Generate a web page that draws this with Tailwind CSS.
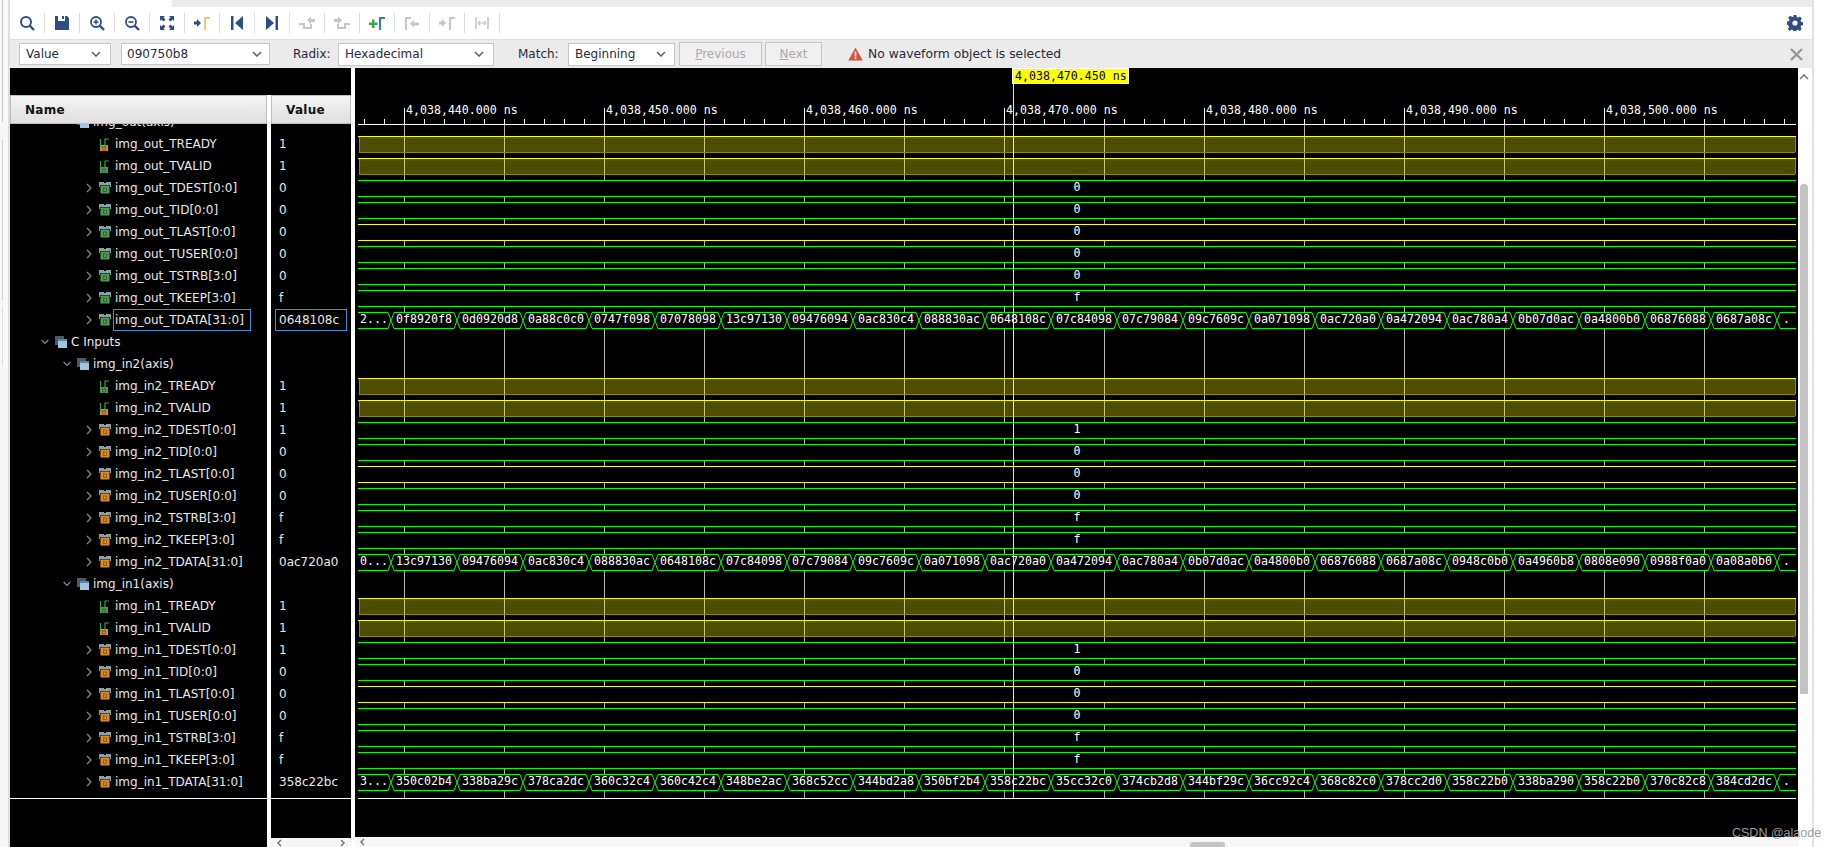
<!DOCTYPE html>
<html lang="en">
<head>
<meta charset="UTF-8">
<title>Waveform</title>
<script src="https://cdn.jsdelivr.net/npm/@tailwindcss/browser@4"></script>
</head>
<body class="bg-white">
<div class="flex w-[1825px] h-[847px] overflow-hidden font-['DejaVu_Sans',sans-serif] text-[12px] text-[#222]">

  <!-- left edge of the window behind -->
  <div class="w-[10px] h-full bg-[#f7f7f7] border-r-2 border-[#dedede] flex flex-col shrink-0">
    <div class="w-px h-[122px] ml-[2px] bg-[#c8c8c8]"></div>
    <div class="w-px h-[160px] mt-[18px] ml-[2px] bg-[#d4d4d4]"></div>
    <div class="w-px h-[60px] mt-[6px] ml-[2px] bg-[#e0e0e0]"></div>
  </div>

  <div class="w-[1802px] h-full flex flex-col shrink-0">
    <!-- top strip -->
    <div class="h-[7px] flex shrink-0">
      <div class="w-[162px] bg-white"></div>
      <div class="flex-1 bg-[#ebebeb]"></div>
    </div>

    <!-- toolbar -->
    <div class="h-[32px] bg-white flex items-center pl-[0px] shrink-0">
      <div class="flex items-center" id="toolbar"></div>
      <div class="flex-1"></div>
      <svg class="w-[16px] h-[16px] mr-[9px]" viewBox="0 0 16 16"><path fill="#2f4c86" d="M6.6 0h2.8l.4 2.2 1.5.6L12.8 1.500l2 2-1.300 1.900.6 1.500 2.200.4v2.800l-2.200.4-.6 1.500 1.300 1.900-2 2-1.900-1.300-1.500.6-.4 2.200H6.600l-.4-2.200-1.500-.6-1.900 1.300-2-2 1.300-1.900-.6-1.500L-.3 9.400V6.600l2.200-.4.6-1.500L1.200 2.800l2-2 1.900 1.300 1.500-.6z"/><circle cx="8" cy="8" r="2.600" fill="#fff"/></svg>
    </div>

    <!-- find bar -->
    <div class="h-[29px] bg-[#ebebeb] border-t border-[#e2e2e2] flex items-center shrink-0 text-[12px] text-[#2a2a3a]">
      <div class="ml-[9px] w-[92px] h-[22px] bg-white border border-[#c6c6c6] flex items-center justify-between pl-[6px] pr-[9px]"><span>Value</span><svg class="w-[10px] h-[6px]" viewBox="0 0 10 6"><path d="M1 1l4 4 4-4" fill="none" stroke="#666" stroke-width="1.600"/></svg></div>
      <div class="ml-[10px] w-[149px] h-[22px] bg-white border border-[#c6c6c6] flex items-center justify-between pl-[5px] pr-[7px]"><span>090750b8</span><svg class="w-[10px] h-[6px]" viewBox="0 0 10 6"><path d="M1 1l4 4 4-4" fill="none" stroke="#666" stroke-width="1.600"/></svg></div>
      <span class="ml-[23px] w-[45px]">Radix:</span>
      <div class="w-[156px] h-[23px] bg-white border border-[#c6c6c6] flex items-center justify-between pl-[6px] pr-[9px]"><span>Hexadecimal</span><svg class="w-[10px] h-[6px]" viewBox="0 0 10 6"><path d="M1 1l4 4 4-4" fill="none" stroke="#666" stroke-width="1.600"/></svg></div>
      <span class="ml-[24px] w-[50px]">Match:</span>
      <div class="w-[107px] h-[23px] bg-white border border-[#c6c6c6] flex items-center justify-between pl-[6px] pr-[8px]"><span>Beginning</span><svg class="w-[10px] h-[6px]" viewBox="0 0 10 6"><path d="M1 1l4 4 4-4" fill="none" stroke="#666" stroke-width="1.600"/></svg></div>
      <div class="ml-[4px] w-[83px] h-[24px] bg-[#f0f0f0] border border-[#c6c6c6] flex items-center justify-center text-[#aaaaaa]"><span><u>P</u>revious</span></div>
      <div class="ml-[3px] w-[57px] h-[24px] bg-[#f0f0f0] border border-[#c6c6c6] flex items-center justify-center text-[#aaaaaa]"><span><u>N</u>ext</span></div>
      <svg class="ml-[26px] w-[15px] h-[14px]" viewBox="0 0 15 14"><path d="M7.500 .5L14.700 13.500H.3z" fill="#d9503f"/><path d="M6.700 4.500h1.600v5H6.700zM6.700 10.300h1.600v1.800H6.700z" fill="#fff"/></svg>
      <span class="ml-[5px] text-[12.3px]">No waveform object is selected</span>
      <div class="flex-1"></div>
      <svg class="w-[13px] h-[13px] mr-[9px]" viewBox="0 0 13 13"><path d="M1 1l11 11M12 1L1 12" stroke="#979797" stroke-width="2.400"/></svg>
    </div>

    <!-- main area -->
    <div class="h-[779px] flex shrink-0">
      <div class="w-[341px] shrink-0 flex flex-col">
        <div class="h-[27px] bg-black shrink-0"></div>
        <div class="flex flex-1 gap-[4px]">
          <!-- name column -->
          <div class="w-[257px] flex flex-col bg-black">
            <div class="h-[29px] shrink-0 bg-gradient-to-b from-[#f4f4f4] to-[#dfdfdf] border border-[#bdbdbd] flex items-center pl-[14px] font-bold text-[12px] tracking-[0.3px] text-[#111]">Name</div>
            <div id="names" class="h-[674px] overflow-hidden text-[#e9e9e9] shrink-0"></div>
            <div class="h-px bg-white shrink-0"></div>
          </div>
          <!-- value column -->
          <div class="w-[80px] flex flex-col bg-black">
            <div class="h-[29px] shrink-0 bg-gradient-to-b from-[#f4f4f4] to-[#dfdfdf] border border-[#bdbdbd] flex items-center pl-[14px] font-bold text-[12px] tracking-[0.3px] text-[#111]">Value</div>
            <div id="values" class="h-[674px] overflow-hidden text-[#e9e9e9] shrink-0"></div>
            <div class="h-px bg-white shrink-0"></div>
            <div class="h-[39px] shrink-0"></div>
            <div class="flex-1 bg-[#f5f5f5] flex items-center justify-between px-[5px]">
              <svg class="w-[6px] h-[8px]" viewBox="0 0 6 8"><path d="M5 1L2 4l3 3" fill="none" stroke="#777" stroke-width="1.500"/></svg>
              <svg class="w-[6px] h-[8px]" viewBox="0 0 6 8"><path d="M1 1l3 3-3 3" fill="none" stroke="#777" stroke-width="1.500"/></svg>
            </div>
          </div>
        </div>
      </div>
      <div class="w-[4px] bg-white shrink-0"></div>

      <!-- wave column -->
      <div class="w-[1443px] shrink-0 flex flex-col bg-black relative">
        <svg id="wave" class="w-[1443px] h-[769px] block shrink-0 font-['DejaVu_Sans_Mono',monospace] text-[11.6px]" viewBox="355 68 1443 769" xmlns="http://www.w3.org/2000/svg"></svg>
        <div class="flex-1 bg-[#f7f7f7] flex items-center relative pl-[4px]">
          <svg class="w-[6px] h-[8px]" viewBox="0 0 6 8"><path d="M5 1L2 4l3 3" fill="none" stroke="#777" stroke-width="1.500"/></svg>
          <div class="absolute left-[835px] top-[5px] w-[35px] h-[5px] bg-[#c4c4c4] rounded-t-[3px]"></div>
        </div>
        <span class="absolute left-[1377px] top-[756px] font-['Liberation_Sans',sans-serif] text-[12.5px] text-[#9a9a9a] whitespace-nowrap">CSDN @alaode</span>
      </div>

      <!-- vertical scrollbar -->
      <div class="w-[14px] shrink-0 bg-white flex flex-col items-center">
        <svg class="w-[10px] h-[6px] mt-[6px] mr-[2px]" viewBox="0 0 10 6"><path d="M1 5l4-4 4 4" fill="none" stroke="#777" stroke-width="1.600"/></svg>
        <div class="w-[8px] h-[510px] mt-[104px] mr-[2px] bg-[#c2c2c2] rounded-t-[4px]"></div>
      </div>
    </div>
  </div>

  <!-- right edge -->
  <div class="w-[13px] h-full bg-white border-l-2 border-[#e2e2e2] shrink-0"></div>
</div>

<script>
  const NAVY = '#2f4c86', GRAY = '#c6c6c6'
  // toolbar icons, 18x18 boxes
  const toolIcons = [
    `<circle cx="8" cy="8" r="5" fill="none" stroke="${NAVY}" stroke-width="2"/><path d="M11.500 11.500l4.500 4.500" stroke="${NAVY}" stroke-width="2.400"/>`,
    `<path d="M2 2h3v5h7V2h2l2 2v12H2z" fill="${NAVY}"/><path d="M9 2h2v3H9z" fill="${NAVY}"/>`,
    `<circle cx="8" cy="8" r="5" fill="none" stroke="${NAVY}" stroke-width="1.800"/><path d="M5.500 8h5M8 5.500v5" stroke="${NAVY}" stroke-width="1.600"/><path d="M11.500 11.500l4.500 4.500" stroke="${NAVY}" stroke-width="2.400"/>`,
    `<circle cx="8" cy="8" r="5" fill="none" stroke="${NAVY}" stroke-width="1.800"/><path d="M5.500 8h5" stroke="${NAVY}" stroke-width="1.600"/><path d="M11.500 11.500l4.500 4.500" stroke="${NAVY}" stroke-width="2.400"/>`,
    `<path d="M2 2h5L5.500 3.500 7.500 5.500 5.500 7.500 3.500 5.500 2 7zM16 2v5l-1.500-1.500-2 2-2-2 2-2L11 2zM2 16v-5l1.500 1.500 2-2 2 2-2 2L7 16zM16 16h-5l1.500-1.500-2-2 2-2 2 2L16 11z" fill="${NAVY}"/>`,
    `<path d="M1 7.500h3V5l4 4-4 4v-2.500H1z" fill="${NAVY}"/><path d="M11 16V3h6v2h-4v11z" fill="#e3cf7a"/>`,
    `<path d="M3 2h2.500v14H3zM15 2v14L7 9z" fill="${NAVY}"/>`,
    `<path d="M12.500 2H15v14h-2.500zM3 2v14l8-7z" fill="${NAVY}"/>`,
    `<path d="M1 10h5v4h7v-4" fill="none" stroke="${GRAY}" stroke-width="2"/><path d="M9 6l4-3.500V5h4v3h-4v2.500z" fill="${GRAY}"/>`,
    `<path d="M17 10h-5v4H5v-4" fill="none" stroke="${GRAY}" stroke-width="2"/><path d="M9 6L5 2.500V5H1v3h4v2.500z" fill="${GRAY}"/>`,
    `<path d="M1 8.500h3v-3h2.500v3h3V11h-3v3H4v-3H1z" fill="#3fa64a"/><path d="M11 16V3h6v2h-4v11z" fill="#2f7fb5"/>`,
    `<path d="M2 16V3h6v2H4v11z" fill="${GRAY}"/><path d="M7 9.500l4-3.500v2.500h5v3h-5V14z" fill="${GRAY}"/>`,
    `<path d="M1 7.500h3V5l4 4-4 4v-2.500H1z" fill="${GRAY}"/><path d="M11 16V3h6v2h-4v11z" fill="${GRAY}"/>`,
    `<path d="M3 3v12M15 3v12" stroke="${GRAY}" stroke-width="1.600"/><path d="M5 9h8M5 9l2-2M5 9l2 2M13 9l-2-2M13 9l-2 2" stroke="${GRAY}" stroke-width="1.200" fill="none"/>`
  ]
  document.getElementById('toolbar').innerHTML = toolIcons.map(p =>
    `<div class="w-[35px] h-[20px] flex items-center justify-center border-r border-[#dcdcdc]"><svg class="w-[18px] h-[18px]" viewBox="0 0 18 18">${p}</svg></div>`
  ).join('')

  // tree icons
  const bitIcon = c => `<svg class="w-[12px] h-[13px] shrink-0" viewBox="0 0 12 13"><rect x="1" y="7" width="8" height="6" fill="${c}"/><path d="M1.500 9V1M1.500 9H6V1h4" fill="none" stroke="#3fa04c" stroke-width="1.200"/><rect x="3.500" y="9" width="3" height="3" fill="none" stroke="#00000066" stroke-width="0.800"/></svg>`
  const busIcon = c => `<svg class="w-[12px] h-[12px] shrink-0" viewBox="0 0 12 12"><path d="M0 0h5v1h2V0h5v5h-1V3H1v2H0z" fill="#8e9ea6"/><rect x="1.500" y="3.500" width="9" height="8" fill="${c}"/><rect x="4.500" y="6" width="3" height="3.500" fill="none" stroke="#00000066" stroke-width="0.800"/></svg>`
  const groupIcon = `<svg class="w-[12px] h-[12px] shrink-0" viewBox="0 0 12 12"><rect x="0" y="0" width="9" height="9" fill="#4a5a66"/><rect x="3" y="3" width="9" height="9" fill="#9cc6e2"/><rect x="3" y="3" width="9" height="2" fill="#5f86a2"/></svg>`
  const chevDown = `<svg class="w-[8px] h-[6px] shrink-0" viewBox="0 0 8 6"><path d="M.7 1L4 4.500 7.300 1" fill="none" stroke="#8a8a8a" stroke-width="1.200"/></svg>`
  const chevRight = `<svg class="w-[6px] h-[10px] ml-[1px] mr-[1px] shrink-0" viewBox="0 0 6 10"><path d="M1 1l4 4-4 4" fill="none" stroke="#8a8a8a" stroke-width="1.200"/></svg>`
  const noChev = `<div class="w-[8px] shrink-0"></div>`

  const GREEN = '#4d9a52', ORANGE = '#dc8a26'
  function bundle(name, busColor, readyColor, validColor, vals) {
    const fields = ['TDEST[0:0]','TID[0:0]','TLAST[0:0]','TUSER[0:0]','TSTRB[3:0]','TKEEP[3:0]','TDATA[31:0]']
    return [
      {pl:75, label:name+'_TREADY', icon:bitIcon(readyColor), chev:noChev, val:'1', wave:'bit'},
      {pl:75, label:name+'_TVALID', icon:bitIcon(validColor), chev:noChev, val:'1', wave:'bit'}
    ].concat(fields.map((f,i)=>({pl:75, label:name+'_'+f, icon:busIcon(busColor), chev:chevRight, val:vals[i], wave:i==6?'data':'bus', yellow:i==2})))
  }
  const axisRow = n => ({pl:53, label:n+'(axis)', icon:groupIcon, chev:chevDown})
  const rows = [axisRow('img_out')]
    .concat(bundle('img_out', GREEN, ORANGE, GREEN, ['0','0','0','0','0','f','0648108c']))
    .concat([{pl:31, label:'C Inputs', icon:groupIcon, chev:chevDown}, axisRow('img_in2')])
    .concat(bundle('img_in2', ORANGE, GREEN, ORANGE, ['1','0','0','0','f','f','0ac720a0']))
    .concat([axisRow('img_in1')])
    .concat(bundle('img_in1', ORANGE, GREEN, ORANGE, ['1','0','0','0','f','f','358c22bc']))
    .concat([{pl:75, label:'', icon:'', chev:chevRight}])

  let nameHtml = '', valHtml = ''
  rows.forEach((r,i) => {
    const first = i==0 ? 'mt-[-13px]' : ''
    const sel = r.label=='img_out_TDATA[31:0]'
    const label = sel
      ? `<span class="border border-[#3b8ed0] h-[22px] w-[138px] ml-[-2px] pl-[1px] flex items-center whitespace-nowrap">${r.label}</span>`
      : `<span class="whitespace-nowrap">${r.label}</span>`
    nameHtml += `<div class="h-[22px] flex items-center gap-[6px] ${first}" style="padding-left:${r.pl}px">${r.chev}<div class="flex items-center gap-[4px]">${r.icon}${label}</div></div>`
    const v = r.val || ''
    valHtml += r.val && sel
      ? `<div class="h-[22px] ml-[4px] w-[72px] border border-[#3b8ed0] pl-[3px] flex items-center">${v}</div>`
      : `<div class="h-[22px] pl-[8px] flex items-center ${first}">${v}</div>`
  })
  document.getElementById('names').innerHTML = nameHtml
  document.getElementById('values').innerHTML = valHtml

  // waveform canvas
  const dataRows = {
    8: ['2...','0f8920f8','0d0920d8','0a88c0c0','0747f098','07078098','13c97130','09476094','0ac830c4','088830ac','0648108c','07c84098','07c79084','09c7609c','0a071098','0ac720a0','0a472094','0ac780a4','0b07d0ac','0a4800b0','06876088','0687a08c','.'],
    19: ['0...','13c97130','09476094','0ac830c4','088830ac','0648108c','07c84098','07c79084','09c7609c','0a071098','0ac720a0','0a472094','0ac780a4','0b07d0ac','0a4800b0','06876088','0687a08c','0948c0b0','0a4960b8','0808e090','0988f0a0','0a08a0b0','.'],
    29: ['3...','350c02b4','338ba29c','378ca2dc','360c32c4','360c42c4','348be2ac','368c52cc','344bd2a8','350bf2b4','358c22bc','35cc32c0','374cb2d8','344bf29c','36cc92c4','368c82c0','378cc2d0','358c22b0','338ba290','358c22b0','370c82c8','384cd2dc','.']
  }
  const L = 358, R = 1796
  let s = ''
  // grid
  for (let x = 404; x < R; x += 100) s += `<rect x="${x}" y="124" width="1" height="674" fill="#b4b4b4"/>`
  // ruler
  s += `<rect x="${L}" y="124" width="${R-L}" height="1" fill="#fff"/>`
  for (let x = 364; x < R; x += 20) s += `<rect x="${x}" y="119" width="1" height="5" fill="#fff"/>`
  const labels = ['440','450','460','470','480','490','500']
  labels.forEach((t,i) => {
    const x = 404 + i*200
    s += `<rect x="${x}" y="108" width="1" height="16" fill="#fff"/>`
    s += `<text x="${x+2}" y="114" fill="#fff">4,038,${t}.000 ns</text>`
  })
  // signal rows, row index 0 sits at y=136
  rows.slice(1).forEach((r,i) => {
    const top = 136 + i*22, bot = top + 16
    if (r.wave == 'bit') {
      s += `<rect x="359" y="${top}" width="1436" height="16" fill="#ffff00" fill-opacity="0.3"/>`
      s += `<rect x="359" y="${bot}" width="1436" height="1" fill="#8f8a00"/><rect x="359" y="${top}" width="1" height="16" fill="#8f8a00"/><rect x="1795" y="${top}" width="1" height="16" fill="#8f8a00"/>`
      s += `<rect x="${L}" y="${top}" width="${R-L}" height="1" fill="#ffff00"/>`
    } else if (r.wave == 'bus') {
      const c = r.yellow ? '#ffff00' : '#00ff00'
      s += `<rect x="${L}" y="${top}" width="${R-L}" height="17" fill="#000"/>`
      s += `<rect x="${L}" y="${top}" width="${R-L}" height="1" fill="${c}"/><rect x="${L}" y="${bot}" width="${R-L}" height="1" fill="${c}"/>`
      s += `<text x="1077" y="${top+11}" fill="#fff" text-anchor="middle">${r.val}</text>`
    } else if (r.wave == 'data') {
      s += `<rect x="${L}" y="${top}" width="${R-L}" height="17" fill="#000"/>`
      const vals = dataRows[i]
      const edges = vals.slice(1).map((_,k) => 391 + 66*k)
      let prev = L
      edges.forEach(e => {
        s += `<path d="M${prev+(prev==L?0:3)} ${top+.5}H${e-3}M${prev+(prev==L?0:3)} ${bot+.5}H${e-3}M${e-3} ${top+.5}L${e+3} ${bot+.5}M${e+3} ${top+.5}L${e-3} ${bot+.5}" stroke="#00ff00" fill="none"/>`
        prev = e
      })
      s += `<path d="M${prev+3} ${top+.5}H${R}M${prev+3} ${bot+.5}H${R}" stroke="#00ff00" fill="none"/>`
      vals.forEach((v,k) => {
        if (k == 0) s += `<text x="${L+2}" y="${top+11}" fill="#fff">${v}</text>`
        else if (k == vals.length-1) s += `<text x="${edges[k-1]+6}" y="${top+11}" fill="#fff">${v}</text>`
        else s += `<text x="${edges[k-1]+33}" y="${top+11}" fill="#fff" text-anchor="middle">${v}</text>`
      })
    }
  })
  s += `<rect x="${L}" y="798" width="${R-L}" height="1" fill="#fff"/>`
  // cursor and its flag
  s += `<rect x="1013" y="84" width="1" height="714" fill="#ffff00"/>`
  s += `<rect x="1012.500" y="68.500" width="116" height="15" fill="#ffff00" stroke="#fff"/>`
  s += `<text x="1015" y="80" fill="#000">4,038,470.450 ns</text>`
  document.getElementById('wave').innerHTML = s
</script>
</body>
</html>
